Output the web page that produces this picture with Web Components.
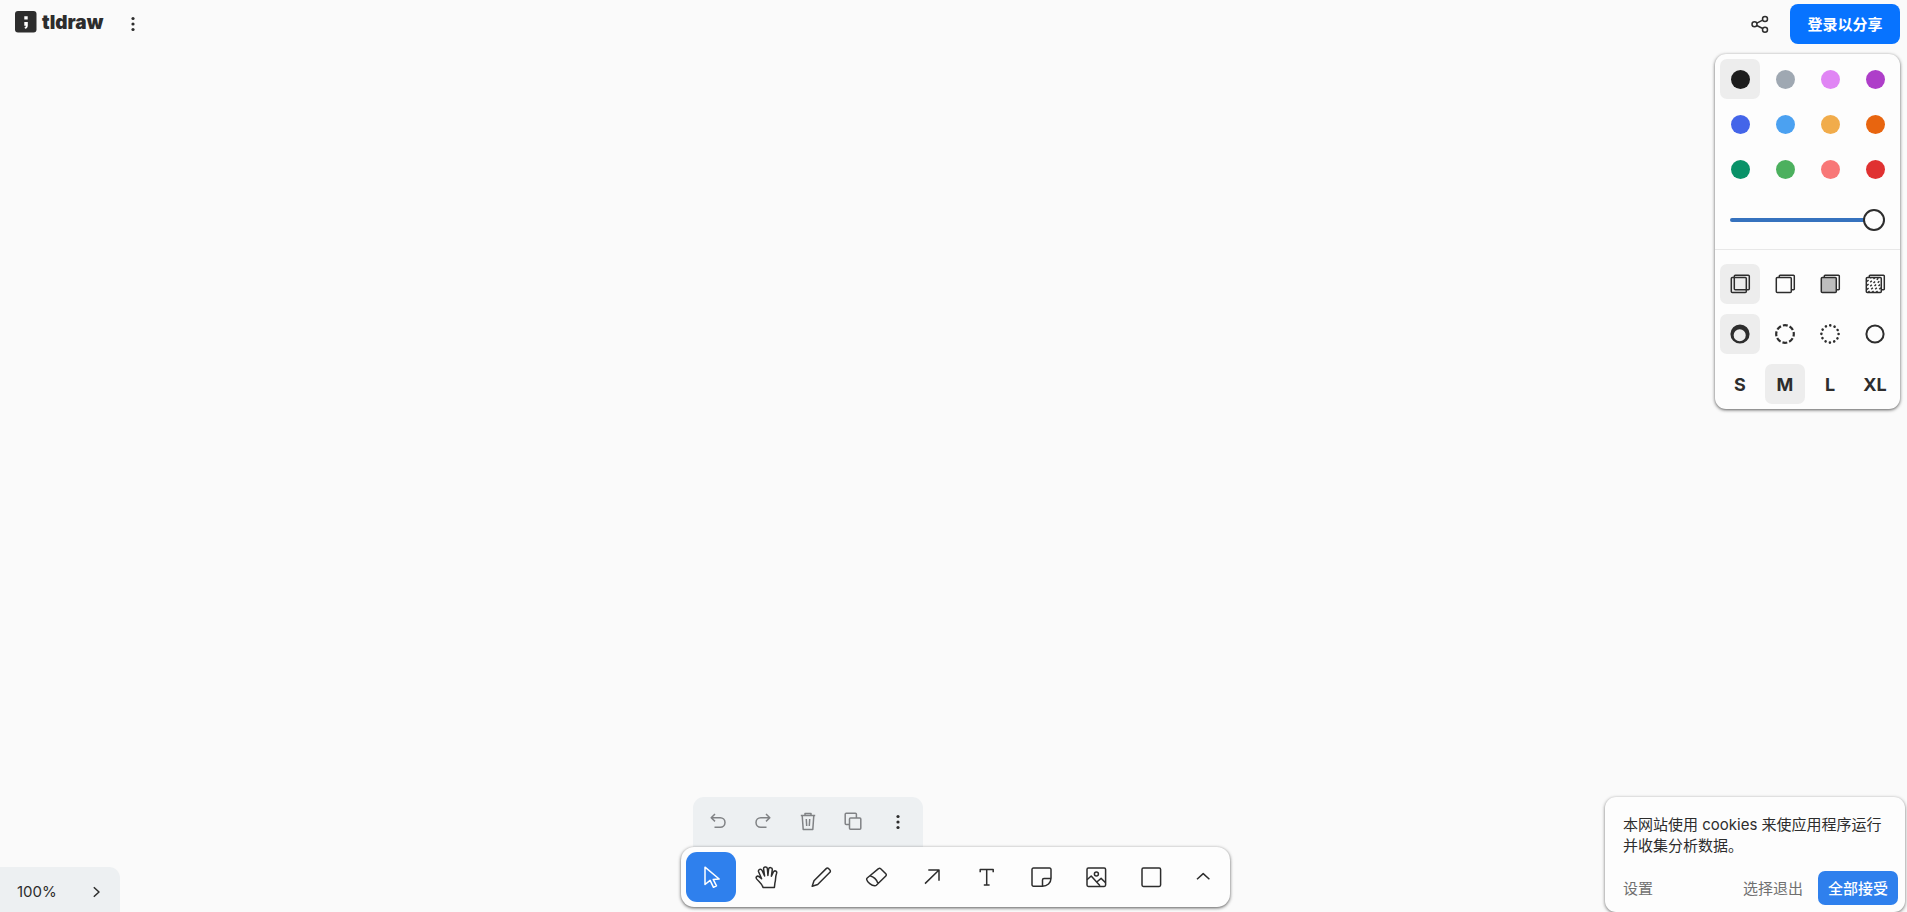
<!DOCTYPE html>
<html lang="zh-CN">
<head>
<meta charset="utf-8">
<title>tldraw</title>
<style>
    body {
        margin: 0;
        background: #fafafa;
        color: #2d2d2d;
        font-family: Inter, "Noto Sans CJK SC", sans-serif;
        font-size: 15px;
    }
</style>
</head>
<body>
<draw-app>
    <menu-zone slot="menu"></menu-zone>
    <share-zone slot="share">登录以分享</share-zone>
    <style-panel slot="share"></style-panel>
    <zoom-nav slot="nav">100%</zoom-nav>
    <tool-bar slot="tools"></tool-bar>
    <cookie-notice slot="notice">
        本网站使用 cookies 来使应用程序运行并收集分析数据。
        <span slot="settings">设置</span>
        <span slot="reject">选择退出</span>
        <span slot="accept">全部接受</span>
    </cookie-notice>
</draw-app>

<script>
const base = `
    <style>
    :host, * {
        box-sizing: border-box;
    }

    button {
        display: flex;
        align-items: center;
        justify-content: center;
        padding: 0;
        border: 0;
        background: none;
        color: inherit;
        font: inherit;
        cursor: pointer;
    }
    </style>
`

const icons = {
    dots: '<g fill="currentColor" stroke="none"><circle cx="12" cy="6.5" r="1.6"/><circle cx="12" cy="12" r="1.6"/><circle cx="12" cy="17.5" r="1.6"/></g>',
    share: '<circle cx="17" cy="7" r="2.5"/><circle cx="6.5" cy="12.3" r="2.5"/><circle cx="17" cy="17.7" r="2.5"/><path d="M8.8 11.1 14.7 8.1M8.8 13.5l5.9 3"/>',
    undo: '<path d="M9 4 5.2 7.7 9 11.4M5.5 7.7h8.7a4.8 4.8 0 0 1 0 9.6H8.5"/>',
    redo: '<path d="M15 4l3.8 3.7L15 11.4M18.5 7.7H9.8a4.8 4.8 0 0 0 0 9.6h5.7"/>',
    trash: '<path d="M4.8 5.5h14.4M9 5.5V3.5h6v2M6.2 5.5l1 14h9.6l1-14M10.3 9l.4 7M13.7 9l-.4 7"/>',
    duplicate: '<rect x="8.5" y="8" width="11.3" height="11.3" rx="1"/><path d="M8.5 14.5H5.2a1 1 0 0 1-1-1V4.3a1 1 0 0 1 1-1h9.2a1 1 0 0 1 1 1V8"/>',
    select: '<path d="M6 2.2v17.3l5.1-4.1 3.4 6.9 3-1.4-3.3-6.5 6-.4z"/>',
    hand: '<path d="M9 22.4C8.3 18.8 5.2 17.2 2.6 13.9 1.3 12 3.2 10.4 5 11.6l2.6 2.2-3-7C3.8 4.6 6.9 3.2 8 5.3l2.6 5.7-1-7c-.3-2.4 3.4-2.8 3.8-.4l.5 6.9.7-6.3c.4-2.3 3.9-2 3.7.4l-.9 6.6 2-4.2c1-2 3.9-1 3.2 1.2-1.6 4.3-.6 6.8-1.7 9.8l-.5 4.4z"/>',
    draw: '<path d="M3.2 21.3 5 15.8 17.2 3.6a1.6 1.6 0 0 1 2.3 0l1.4 1.4a1.6 1.6 0 0 1 0 2.3L8.7 19.5z"/>',
    eraser: '<path d="M14.5 3.7a1.6 1.6 0 0 1 2.2 0l5.1 5a1.6 1.6 0 0 1 0 2.3l-9.5 9.3a2 2 0 0 1-1.5.5C7.5 20.6 3.3 17.2 2.7 14.6a1.6 1.6 0 0 1 .5-1.6zM6.4 10.9c3 .6 6.4 3.6 7.3 7"/>',
    arrow: '<path d="M6 18.6 20 5M9.3 5H20v10.8"/>',
    text: '<path d="M6.2 7.2V4.5h13v2.7M12.7 4.5V20M9.8 20h5.8"/>',
    note: '<path d="M13.5 21.2H4.4a1.4 1.4 0 0 1-1.4-1.4V4.4A1.4 1.4 0 0 1 4.4 3h16.2A1.4 1.4 0 0 1 22 4.4v8.9c0 4.5-3.8 7.9-8.5 7.9V15a1.5 1.5 0 0 1 1.5-1.5h7"/>',
    image: '<rect x="3" y="3" width="18.6" height="18.4" rx="1.4"/><circle cx="12.4" cy="9" r="2"/><path d="M3 14.8 7.2 11 16 20.8M12.8 17l4.3-3.6 4.5 4.4"/>',
    rectangle: '<rect x="3" y="3" width="18.6" height="18.4" rx="1.4"/>',
    up: '<path d="M6 14.3 12.2 8.6l6.2 5.7"/>',
    right: '<path d="M9.8 7.2 15 12l-5.2 4.8"/>',
    fillNone: '<rect x="3.3" y="5.6" width="15" height="15" rx="1"/><rect x="6.3" y="3.2" width="15" height="14.6" rx="1"/>',
    fillSemi: '<rect x="3.3" y="5.6" width="15" height="15" rx="1"/><path d="M6.3 5.6V4a.8.8 0 0 1 .8-.8h13.4a.8.8 0 0 1 .8.8v13a.8.8 0 0 1-.8.8h-2.2"/>',
    fillSolid: '<rect x="3.3" y="5.6" width="15" height="15" rx="1" fill="#bdbdbd"/><path d="M6.3 5.6V4a.8.8 0 0 1 .8-.8h13.4a.8.8 0 0 1 .8.8v13a.8.8 0 0 1-.8.8h-2.2"/>',
    fillPattern: '<rect x="3.3" y="5.6" width="15" height="15" rx="1"/><path d="M6.3 5.6V4a.8.8 0 0 1 .8-.8h13.4a.8.8 0 0 1 .8.8v13a.8.8 0 0 1-.8.8h-2.2"/><path stroke-width="1.4" stroke-dasharray="2.2 2.4" d="M4 9.6 8 5.6M4 13.6l8-8M4 17.6l12-12M5 20.6 18 7.6M9 20.6l9-9M13 20.6l5-5"/>',
    dashDraw: '<path fill="currentColor" fill-rule="evenodd" stroke="none" d="M12 2.4a9.6 9.6 0 1 0 0 19.2 9.6 9.6 0 0 0 0-19.2zM11.7 7.2a6 6 0 1 1 0 12.1 6 6 0 0 1 0-12.1z"/>',
    dashDashed: '<circle cx="12" cy="12" r="8.8" stroke-width="2.2" stroke-dasharray="4.9 2.01" stroke-dashoffset="2.4"/>',
    dashDotted: '<circle cx="12" cy="12" r="8.6" stroke-width="2.6" stroke-linecap="round" stroke-dasharray="0.01 4.493"/>',
    dashSolid: '<circle cx="12" cy="12" r="8.6" stroke-width="2"/>'
}

// every icon is drawn on a 24px grid
const icon = name => `<svg width="24" height="24" viewBox="0 0 24 24" fill="none" stroke="currentColor" stroke-width="1.5" stroke-linejoin="round" aria-hidden="true">${icons[name]}</svg>`

class BaseElement extends HTMLElement {
    constructor() {
        super()
        const template = document.createElement('template')
        template.innerHTML = base + this.render()
        this.attachShadow({mode:'open'})
        this.shadowRoot.appendChild(template.content.cloneNode(true))
    }

    // only one button of a group is selected
    connectedCallback() {
        this.shadowRoot.querySelectorAll('.group').forEach(group => {
            group.addEventListener('click', e => {
                const button = e.target.closest('button')
                if (!button || !group.contains(button)) return
                group.querySelectorAll('button').forEach(b => b.setAttribute('aria-pressed', b === button))
            })
        })
    }
}

class DrawApp extends BaseElement {
    render() {
        return `
            <style>
            :host {
                display: grid;
                grid-template-rows: 1fr auto;
                min-height: 100vh;
            }

            .top {
                display: flex;
                justify-content: space-between;
                align-items: flex-start;
            }

            .side {
                display: flex;
                flex-direction: column;
                align-items: flex-end;
                gap: 10px;
                padding: 4px 7px 0 0;
            }

            .bottom {
                display: grid;
                grid-template-columns: 1fr auto 1fr;
                align-items: end;
            }

            .notice {
                display: flex;
                justify-content: flex-end;
            }
            </style>
            <div class="top">
                <slot name="menu"></slot>
                <div class="side"><slot name="share"></slot></div>
            </div>
            <div class="bottom">
                <slot name="nav"></slot>
                <slot name="tools"></slot>
                <div class="notice"><slot name="notice"></slot></div>
            </div>
        `
    }
}

class MenuZone extends BaseElement {
    render() {
        return `
            <style>
            :host {
                display: flex;
                align-items: flex-start;
                gap: 10px;
                padding: 2px 0 0 15px;
            }

            a {
                display: flex;
                align-items: center;
                gap: 5px;
                height: 40px;
                color: inherit;
                font-size: 19px;
                font-weight: 900;
                text-decoration: none;
            }

            button {
                width: 40px;
                height: 44px;
            }
            </style>
            <a href="#">
                <svg width="22" height="22" viewBox="0 0 22 22" aria-hidden="true">
                    <rect width="21.5" height="21.5" rx="3" fill="#2d2d2d"/>
                    <path fill="#fff" d="M9.3 5.2h3.4v3.4H9.3zM9.3 11h3.5v3.4c0 1.8-1 3-2.6 3.4l-.8-1.2c.8-.3 1.3-.8 1.4-1.8H9.3z"/>
                </svg>
                <span>tldraw</span>
            </a>
            <button aria-label="菜单">${icon('dots')}</button>
        `
    }
}

class ShareZone extends BaseElement {
    render() {
        return `
            <style>
            :host {
                display: flex;
                gap: 10px;
            }

            button {
                width: 40px;
                height: 40px;
            }

            .login {
                width: 110px;
                padding-bottom: 2px;
                border-radius: 8px;
                background: #0773ff;
                color: #fff;
                font-weight: 700;
            }
            </style>
            <button aria-label="分享">${icon('share')}</button>
            <button class="login"><slot></slot></button>
        `
    }
}

const colors = {
    black: '#1d1d1d',
    grey: '#9fa8b2',
    'light-violet': '#e085f4',
    violet: '#ae3ec9',
    blue: '#4465e9',
    'light-blue': '#4ba1f1',
    yellow: '#f1ac4b',
    orange: '#e8650f',
    green: '#099268',
    'light-green': '#4cb05e',
    'light-red': '#f87777',
    red: '#e03131'
}

class StylePanel extends BaseElement {
    render() {
        const swatches = Object.entries(colors).map(([name, value]) =>
            `<button aria-label="${name}" aria-pressed="${name === 'black'}"><i style="background:${value}"></i></button>`
        ).join('')
        const row = (names, selected) => names.map(name =>
            `<button aria-label="${name}" aria-pressed="${name === selected}">${icon(name)}</button>`
        ).join('')
        const sizes = ['S', 'M', 'L', 'XL'].map(size =>
            `<button aria-pressed="${size === 'M'}">${size}</button>`
        ).join('')

        return `
            <style>
            :host {
                display: block;
                width: 185px;
                border-radius: 11px;
                background: #fdfdfd;
                box-shadow: 0 1px 3px rgba(0,0,0,.5), 0 1px 4px rgba(0,0,0,.2);
            }

            .group {
                display: grid;
                grid-template-columns: repeat(4, 40px);
                gap: 5px;
            }

            button {
                height: 40px;
                border-radius: 7px;
            }

            button[aria-pressed="true"] {
                background: #ededed;
            }

            i {
                width: 19px;
                height: 19px;
                border-radius: 50%;
            }

            .colors {
                padding: 5px 5px 9px;
                border-bottom: 1px solid #e8e8e8;
            }

            .shapes {
                display: grid;
                gap: 10px;
                padding: 14px 5px 5px;
            }

            .sizes {
                font-size: 18px;
                font-weight: 700;
            }

            input {
                display: block;
                appearance: none;
                width: 155px;
                height: 40px;
                margin: 11px 5px 0 10px;
                background: none;
            }

            input::-webkit-slider-runnable-track {
                height: 4px;
                border-radius: 2px;
                background: #3572be;
            }

            input::-webkit-slider-thumb {
                appearance: none;
                width: 22px;
                height: 22px;
                margin-top: -9px;
                border: 2px solid #2d2d2d;
                border-radius: 50%;
                background: #fdfdfd;
            }
            </style>
            <div class="colors">
                <div class="group">${swatches}</div>
                <input type="range" aria-label="不透明度" min="0" max="100" value="100">
            </div>
            <div class="shapes">
                <div class="group">${row(['fillNone', 'fillSemi', 'fillSolid', 'fillPattern'], 'fillNone')}</div>
                <div class="group">${row(['dashDraw', 'dashDashed', 'dashDotted', 'dashSolid'], 'dashDraw')}</div>
                <div class="group sizes">${sizes}</div>
            </div>
        `
    }
}

class ZoomNav extends BaseElement {
    render() {
        return `
            <style>
            :host {
                display: flex;
                justify-content: space-between;
                width: 120px;
                height: 45px;
                padding: 4px 4px 0 0;
                border-top-right-radius: 11px;
                background: #edf0f2;
            }

            button {
                height: 41px;
            }

            .zoom {
                padding-left: 17px;
            }

            .toggle {
                width: 40px;
            }
            </style>
            <button class="zoom"><slot></slot></button>
            <button class="toggle" aria-label="小地图">${icon('right')}</button>
        `
    }
}

class ToolBar extends BaseElement {
    render() {
        const tools = ['select', 'hand', 'draw', 'eraser', 'arrow', 'text', 'note', 'image', 'rectangle']
        return `
            <style>
            :host {
                display: flex;
                flex-direction: column;
                align-items: flex-start;
                padding: 0 0 5px 3px;
            }

            .actions {
                display: flex;
                gap: 5px;
                height: 50px;
                margin-left: 12px;
                padding: 5px;
                border-radius: 11px 11px 0 0;
                background: #edf0f2;
            }

            .actions button {
                width: 40px;
                height: 40px;
            }

            .actions button:disabled {
                color: #808285;
            }

            .tools {
                display: flex;
                gap: 5px;
                padding: 5px;
                border-radius: 13px;
                background: #fdfdfd;
                box-shadow: 0 1px 3px rgba(0,0,0,.5), 0 1px 4px rgba(0,0,0,.2);
            }

            .group {
                display: flex;
                gap: 5px;
            }

            .tools button {
                width: 50px;
                height: 50px;
                border-radius: 11px;
            }

            .tools button[aria-pressed="true"] {
                background: #2f80ed;
                color: #fff;
            }

            .tools .more {
                width: 44px;
            }
            </style>
            <div class="actions">
                <button aria-label="撤销" disabled>${icon('undo')}</button>
                <button aria-label="重做" disabled>${icon('redo')}</button>
                <button aria-label="删除" disabled>${icon('trash')}</button>
                <button aria-label="复制" disabled>${icon('duplicate')}</button>
                <button aria-label="更多操作">${icon('dots')}</button>
            </div>
            <div class="tools">
                <div class="group">
                    ${tools.map(t => `<button aria-label="${t}" aria-pressed="${t === 'select'}">${icon(t)}</button>`).join('')}
                </div>
                <button class="more" aria-label="更多工具">${icon('up')}</button>
            </div>
        `
    }
}

class CookieNotice extends BaseElement {
    render() {
        return `
            <style>
            :host {
                display: block;
                width: 300px;
                margin-right: 2px;
                padding: 17px 7px 7px 18px;
                border-radius: 11px;
                background: #fdfdfd;
                box-shadow: 0 1px 3px rgba(0,0,0,.4), 0 1px 4px rgba(0,0,0,.2);
            }

            p {
                margin: 0 0 15px;
                padding-right: 14px;
                line-height: 21px;
            }

            .buttons {
                display: flex;
                gap: 15px;
            }

            button {
                height: 34px;
                padding-bottom: 2px;
                color: #707070;
            }

            .settings {
                margin-right: auto;
            }

            .accept {
                width: 80px;
                border-radius: 7px;
                background: #2f80ed;
                color: #fff;
                font-weight: 500;
            }
            </style>
            <p><slot></slot></p>
            <div class="buttons">
                <button class="settings"><slot name="settings"></slot></button>
                <button><slot name="reject"></slot></button>
                <button class="accept"><slot name="accept"></slot></button>
            </div>
        `
    }
}

window.customElements.define('draw-app', DrawApp)
window.customElements.define('menu-zone', MenuZone)
window.customElements.define('share-zone', ShareZone)
window.customElements.define('style-panel', StylePanel)
window.customElements.define('zoom-nav', ZoomNav)
window.customElements.define('tool-bar', ToolBar)
window.customElements.define('cookie-notice', CookieNotice)
</script>
</body>
</html>
